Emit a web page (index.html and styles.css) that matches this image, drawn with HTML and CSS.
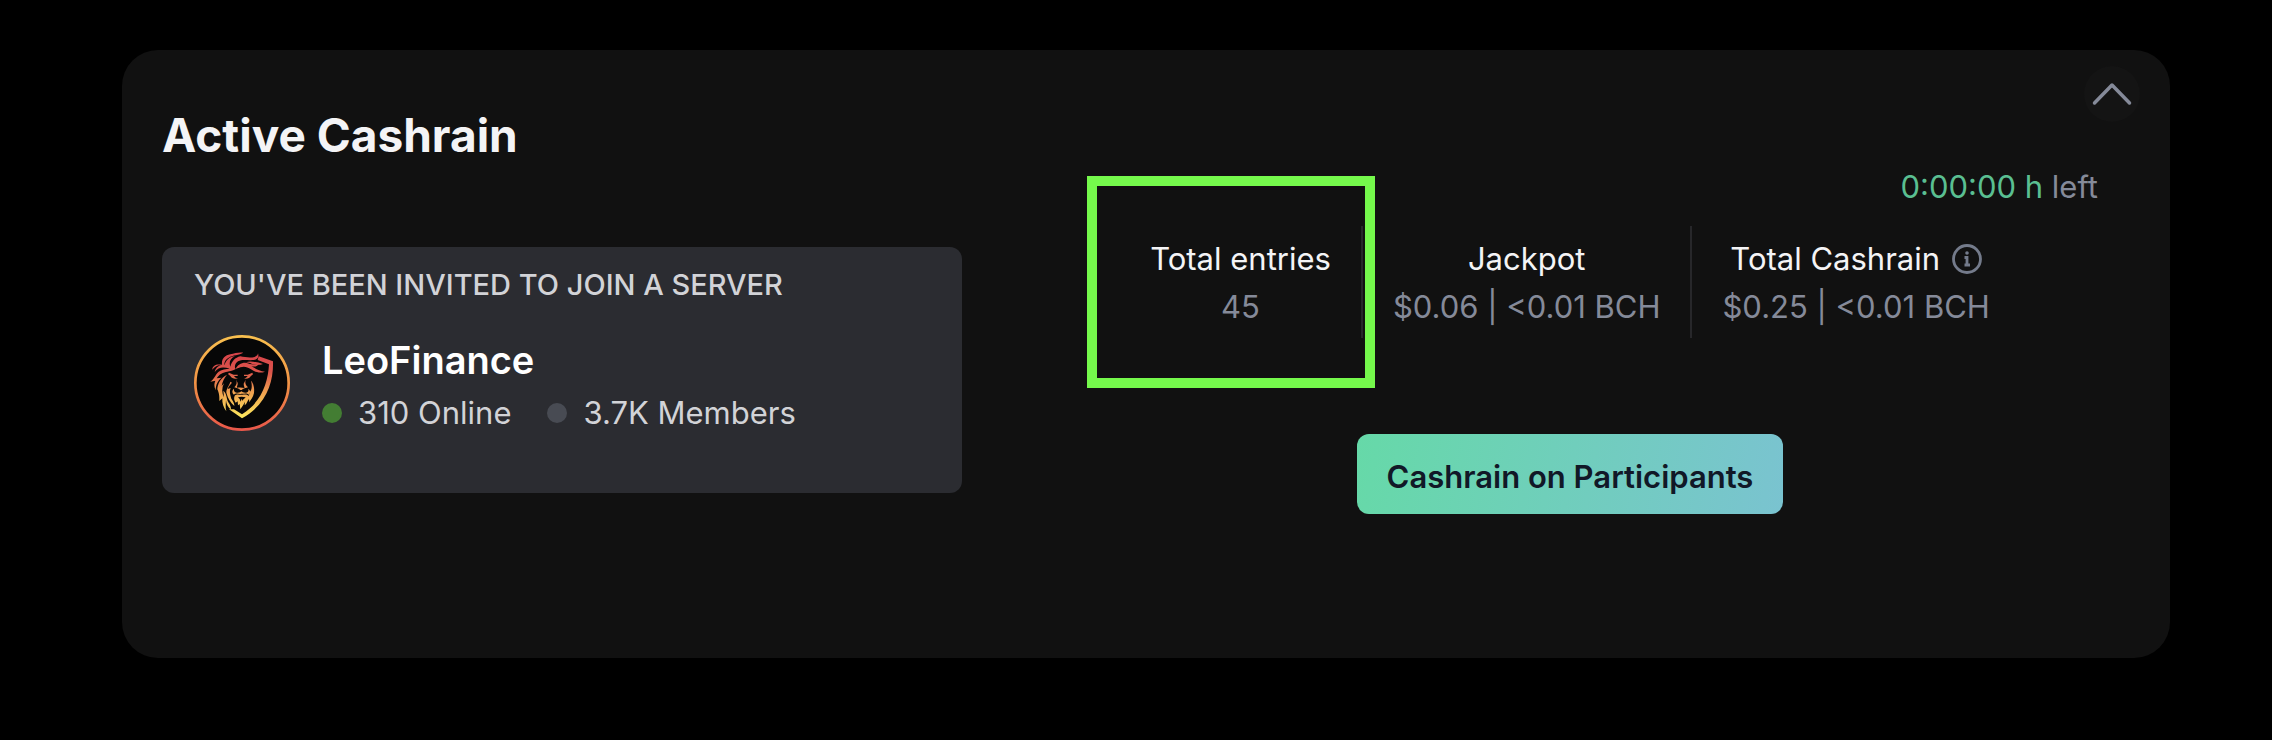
FILE: index.html
```html
<!DOCTYPE html>
<html lang="en">
<head>
<meta charset="utf-8">
<title>Active Cashrain</title>
<link rel="stylesheet" href="styles.css">
</head>
<body>
<main class="card">
  <header class="card-header">
    <h1 class="card-title">Active Cashrain</h1>
    <button class="collapse" type="button" aria-label="Collapse">
      <svg class="collapse-icon" viewBox="0 0 56 56" aria-hidden="true"><path d="M10.500 37 28 19 45.500 37"/></svg>
    </button>
  </header>
  <div class="card-body">
    <section class="invite">
      <h2 class="invite-title">YOU'VE BEEN INVITED TO JOIN A SERVER</h2>
      <div class="server">
        <svg class="server-logo" viewBox="42 44 288 288" role="img" aria-label="LeoFinance logo">
          <defs>
            <linearGradient id="ring" x1="0" y1="0" x2="0" y2="1">
              <stop offset="0" stop-color="#f9c04f"/><stop offset=".5" stop-color="#f09245"/><stop offset="1" stop-color="#e9584a"/>
            </linearGradient>
            <linearGradient id="mane" gradientUnits="userSpaceOnUse" x1="0" y1="96" x2="0" y2="294">
              <stop offset="0" stop-color="#d8434a"/><stop offset=".3" stop-color="#dc554b"/><stop offset=".6" stop-color="#efa04f"/><stop offset="1" stop-color="#fdea5e"/>
            </linearGradient>
          </defs>
          <circle cx="186" cy="188" r="140" fill="#070707" stroke="url(#ring)" stroke-width="8"/>
          <g fill="url(#mane)">
            <path d="M236 108 279 123C281 181 262 252 186 294L147 267 162 267 186 282C244 246 264 188 267 132L233 119Z"/>
            <path d="M190 97C178 104 158 104 146 112C136 118 131 127 134 135C137 119 149 109 165 108C151 114 146 126 151 139C156 122 165 112 181 108C195 111 211 113 224 110C231 107 234 103 234 99C238 110 232 118 221 119C202 121 187 115 174 123C165 129 163 138 166 146C173 134 182 127 196 127C211 130 222 137 238 128C233 139 224 140 214 138C228 145 239 153 255 154C240 160 226 156 213 147C202 140 193 137 181 141C165 146 158 153 142 154C130 156 117 161 110 174L125 172C114 180 107 193 107 210C102 199 102 190 106 181L91 184C102 177 105 165 115 155C124 147 139 146 149 145C132 140 116 138 104 155C106 144 114 137 123 134C113 134 103 140 97 148C97 136 108 130 126 133C124 116 134 105 151 102C164 99 177 95 190 97Z"/>
            <path d="M198 126C210 121 230 125 249 131C238 135 225 134 215 130C209 127 204 127 198 126Z"/>
            <path d="M141 163C133 172 127 184 125 197L132 189C125 203 125 218 132 231L130 211C141 220 139 235 145 246C150 253 153 259 153 268C144 261 139 251 138 240C137 253 136 263 139 273C130 261 126 248 127 234L118 242C119 224 116 216 112 207C112 190 123 172 141 163Z"/>
            <path d="M147 157 161 163 173 163 173 167 162 167C165 172 169 173 174 174C164 177 155 174 151 167L144 161Z"/>
            <path d="M217 157 203 163 192 163 192 167 203 167C200 172 196 174 191 174C201 177 209 173 212 168L219 162Z"/>
            <path d="M168 177C172 186 170 195 163 201C169 204 177 204 181 209L185 209C189 204 198 204 204 201C197 195 194 187 197 178L191 190C191 198 195 201 193 203C187 201 178 201 171 202C170 198 174 194 173 188Z"/>
            <path d="M162 205C160 216 170 219 180 216L184 213 189 216C200 219 208 215 205 205C212 210 212 218 206 223C199 216 190 222 184 220C178 223 169 216 162 223C155 217 156 209 162 205Z"/>
            <path d="M164 226C173 219 178 225 184 223C191 225 198 219 206 227L210 214C217 207 216 193 213 181C221 189 224 204 222 218C220 231 212 237 208 246L207 236C202 242 201 250 194 255L195 244C191 252 187 258 181 267L179 251 174 255 173 243 167 247C162 240 161 233 164 226Z"/>
            <path d="M156 187C151 194 145 197 143 206L152 203C147 213 151 224 154 235C160 244 163 249 163 257C151 245 144 235 140 220C136 208 147 198 151 184Z"/>
          </g>
          <path d="M174 231C181 229 188 229 197 231C193 236 189 236 188 242L185 235 182 244 179 236Z" fill="#070707"/>
        </svg>
        <div class="server-info">
          <h3 class="server-name">LeoFinance</h3>
          <ul class="counts">
            <li class="count"><span class="dot dot-online"></span>310 Online</li>
            <li class="count"><span class="dot"></span>3.7K Members</li>
          </ul>
        </div>
      </div>
    </section>
    <section class="summary">
      <p class="timer"><span class="timer-value">0:00:00 h</span> left</p>
      <dl class="stats">
        <div class="stat stat-marked">
          <dt class="stat-label">Total entries</dt>
          <dd class="stat-value">45</dd>
        </div>
        <div class="stat">
          <dt class="stat-label">Jackpot</dt>
          <dd class="stat-value">$0.06 | &lt;0.01 BCH</dd>
        </div>
        <div class="stat">
          <dt class="stat-label">Total Cashrain
            <svg class="info-icon" viewBox="0 0 30 30" aria-hidden="true"><circle cx="15" cy="15" r="13.500"/><path d="M12.500 13.500H15V20.500M12.500 21H18"/><circle class="info-dot" cx="15" cy="9" r="1.800"/></svg>
          </dt>
          <dd class="stat-value">$0.25 | &lt;0.01 BCH</dd>
        </div>
      </dl>
      <button class="action" type="button">Cashrain on Participants</button>
    </section>
  </div>
</main>
</body>
</html>
```

FILE: styles.css
```css
* {
  box-sizing: border-box;
}

body {
  margin: 0;
  padding: 50px 102px 80px 122px;
  background: #000;
  color: #f4f4f6;
  font: 400 31px/48px Inter, "Liberation Sans", sans-serif;
}

h1, h2, h3, p, ul, dl, dd {
  margin: 0;
  padding: 0;
}

.card {
  padding: 16px 30px 144px 40px;
  border-radius: 36px;
  background: #111;
}

.card-header {
  display: flex;
  align-items: flex-start;
  justify-content: space-between;
}

.card-title {
  margin-top: 41px;
  font-size: 46px;
  font-weight: 700;
  line-height: 56px;
}

.collapse {
  width: 56px;
  height: 56px;
  padding: 0;
  border: 0;
  border-radius: 50%;
  background: #141414;
}

.collapse-icon {
  display: block;
  fill: none;
  stroke: #858a99;
  stroke-width: 3.500;
  stroke-linecap: round;
  stroke-linejoin: round;
}

.card-body {
  display: grid;
  grid-template-columns: 800fr 1056fr;
  column-gap: 80px;
  align-items: start;
  padding-right: 42px;
}

.invite {
  margin-top: 84px;
  padding: 20px 32px 60px;
  border-radius: 12px;
  background: #2b2c31;
  color: #d2d3d7;
}

.invite-title {
  font-size: 29px;
  font-weight: 500;
  line-height: 36px;
}

.server {
  display: flex;
  align-items: flex-start;
  gap: 32px;
  margin-top: 32px;
}

.server-logo {
  flex: none;
  width: 96px;
  height: 96px;
}

.server-info {
  height: 98px;
}

.server-name {
  color: #fff;
  font-size: 38px;
  font-weight: 600;
  line-height: 50px;
}

.counts {
  display: flex;
  gap: 36px;
  margin-top: 4px;
  list-style: none;
}

.count {
  display: flex;
  align-items: center;
  gap: 16px;
}

.dot {
  width: 20px;
  height: 20px;
  border-radius: 50%;
  background: #484b53;
}

.dot-online {
  background: #437d33;
}

.summary {
  display: flex;
  flex-direction: column;
  align-items: center;
}

.timer {
  align-self: flex-end;
  color: #858a99;
}

.timer-value {
  color: #5abf91;
}

.stats {
  display: flex;
  margin-top: 15px;
  text-align: center;
}

.stat {
  position: relative;
  padding: 9px 30px 7px;
}

.stat + .stat {
  border-left: 2px solid #27272a;
}

.stat-label {
  display: flex;
  align-items: center;
  justify-content: center;
  gap: 12px;
}

.stat-value {
  color: #858a99;
}

.stat-marked::after {
  content: "";
  position: absolute;
  z-index: 1;
  inset: -50px -14px -50px -33px;
  border: 10px solid #75f94c;
}

.info-icon {
  width: 30px;
  height: 30px;
  fill: none;
  stroke: #747b8b;
  stroke-width: 2.800;
}

.info-dot {
  fill: #747b8b;
  stroke: none;
}

.action {
  height: 80px;
  margin-top: 96px;
  padding: 6px 30px 0;
  border: 0;
  border-radius: 12px;
  background: linear-gradient(100deg, #66d9a8, #7ac3d0);
  color: #111827;
  font: inherit;
  font-weight: 600;
}
```
